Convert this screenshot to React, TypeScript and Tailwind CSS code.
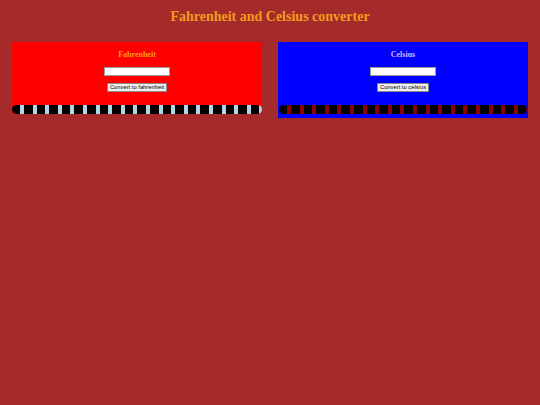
import { useState } from 'react'

/*
 * Two side-by-side converter cards on a brown page.
 * Each card: heading, a number input, a convert button and a striped bar at the bottom.
 */
const ConverterCard = ({
  title,
  buttonLabel,
  variant,
  onConvert,
}: {
  title: string
  buttonLabel: string
  variant: 'red' | 'blue'
  onConvert: (value: string) => string
}) => {
  const [value, setValue] = useState('')
  const isRed = variant === 'red'

  return (
    <div
      className={
        isRed
          ? 'w-[250px] flex flex-col items-center bg-[#ff0000] pt-[8px]'
          : 'w-[250px] flex flex-col items-center bg-[#0000ff] pt-[8px] pb-[4px] px-[1px]'
      }
    >
      <h2
        className={
          isRed
            ? 'text-[8px] leading-[10px] font-bold text-[#ff9a1a]'
            : 'text-[8px] leading-[10px] font-bold text-[#d9b3f5]'
        }
      >
        {title}
      </h2>
      <input
        type="text"
        value={value}
        onChange={(e) => setValue(e.target.value)}
        className="mt-[7px] h-[9px] w-[66px] bg-white border border-[#9a9a9a] outline-none"
      />
      <button
        type="button"
        onClick={() => setValue(onConvert(value))}
        className="mt-[7px] h-[9px] px-[2px] bg-[#efefef] border border-[#8a8a8a] rounded-[1px] text-[5.8px] leading-[7px] text-black font-['Liberation_Sans',Arial,sans-serif]"
      >
        {buttonLabel}
      </button>
      {/* striped bar */}
      <div
        className={
          isRed
            ? 'mt-[13px] h-[9px] w-full rounded-full bg-[repeating-linear-gradient(90deg,#000_0px,#000_8px,#add8e6_8px,#add8e6_12px,#000_12px,#000_12.6px)]'
            : 'mt-[13px] h-[9px] w-full rounded-full bg-[repeating-linear-gradient(90deg,#000_0px,#000_8px,#8b0000_8px,#8b0000_12px,#000_12px,#000_12.6px)]'
        }
      />
    </div>
  )
}

const App = () => {
  const toFahrenheit = (v: string) => {
    const n = parseFloat(v)
    return isNaN(n) ? '' : ((n * 9) / 5 + 32).toFixed(1)
  }
  const toCelsius = (v: string) => {
    const n = parseFloat(v)
    return isNaN(n) ? '' : (((n - 32) * 5) / 9).toFixed(1)
  }

  return (
    <div className="min-h-[405px] bg-[#a52a2a] font-['Liberation_Serif','Times_New_Roman',serif]">
      <h1 className="pt-[9px] text-center text-[14px] leading-[16px] font-bold text-[#f39a1e]">
        Fahrenheit and Celsius converter
      </h1>

      <div className="mt-[17px] flex items-start gap-4 px-3">
        <ConverterCard
          title="Fahrenheit"
          buttonLabel="Convert to fahrenheit"
          variant="red"
          onConvert={toFahrenheit}
        />
        <ConverterCard
          title="Celsius"
          buttonLabel="Convert to celsius"
          variant="blue"
          onConvert={toCelsius}
        />
      </div>
    </div>
  )
}

export default App
